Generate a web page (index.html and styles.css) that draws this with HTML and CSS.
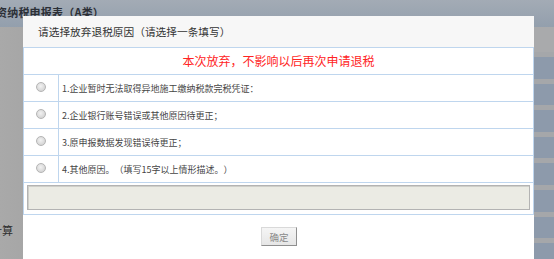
FILE: index.html
```html
<!DOCTYPE html>
<html lang="zh-CN">
<head>
<meta charset="utf-8">
<title>放弃退税原因</title>
<link rel="stylesheet" href="styles.css">
</head>
<body>
<div class="page">
  <div class="topbar"><h1 class="page-title">资纳税申报表（A类）</h1></div>
  <div class="page-body">
    <div class="side"><span class="side-label">计算</span></div>
    <div class="grid">
      <div class="grid-head"></div>
      <div class="grid-row"></div>
      <div class="grid-row"></div>
      <div class="grid-row"></div>
      <div class="grid-row"></div>
      <div class="grid-row"></div>
      <div class="grid-row"></div>
      <div class="grid-row"></div>
      <div class="grid-row"></div>
    </div>
  </div>
</div>

<div class="modal">
  <div class="modal-header">请选择放弃退税原因（请选择一条填写）</div>
  <div class="form">
    <div class="notice">本次放弃，不影响以后再次申请退税</div>
    <label class="option"><span class="radio-cell"><span class="radio"></span></span><span class="option-text">1.企业暂时无法取得异地施工缴纳税款完税凭证：</span></label>
    <label class="option"><span class="radio-cell"><span class="radio"></span></span><span class="option-text">2.企业银行账号错误或其他原因待更正；</span></label>
    <label class="option"><span class="radio-cell"><span class="radio"></span></span><span class="option-text">3.原申报数据发现错误待更正；</span></label>
    <label class="option"><span class="radio-cell"><span class="radio"></span></span><span class="option-text">4.其他原因。（填写15字以上情形描述。）</span></label>
    <div class="text-row"><textarea class="reason" disabled></textarea></div>
  </div>
  <div class="actions"><button class="btn" type="button">确定</button></div>
</div>
</body>
</html>
```

FILE: styles.css
```css
html, body {
  margin: 0;
  padding: 0;
}
body {
  width: 554px;
  height: 259px;
  overflow: hidden;
  position: relative;
  font-family: "Noto Sans CJK SC", "Liberation Sans", sans-serif;
  text-spacing-trim: space-all;
  background: #8e9bab;
}
.page {
  display: flex;
  flex-direction: column;
  height: 259px;
  overflow: hidden;
}
.topbar {
  height: 27px;
  flex: none;
  background: linear-gradient(to bottom, #a3abb5, #939fad);
  display: flex;
  align-items: center;
  overflow: hidden;
}
.page-title {
  margin: 0 0 3px -4px;
  font-size: 11px;
  font-weight: bold;
  letter-spacing: 0.2px;
  color: #2b2f36;
  white-space: nowrap;
}
.page-body {
  flex: 1;
  display: flex;
  overflow: hidden;
}
.side {
  width: 200px;
  flex: none;
  background: linear-gradient(to right, #a9a9a9, #a2a2a2 60px, #9e9e9e);
  display: flex;
  flex-direction: column;
}
.side-label {
  margin: 195px 0 0 -9px;
  font-size: 11px;
  color: #2e2e2e;
  white-space: nowrap;
}
.grid {
  flex: 1;
  display: flex;
  flex-direction: column;
}
.grid-head {
  height: 25px;
  flex: none;
  background: #a9aaac;
}
.grid-row {
  height: 21.6px;
  flex: none;
  border-top: 5px solid #a5a7aa;
  background: #8d9aab;
}

.modal {
  position: absolute;
  left: 23px;
  top: 16px;
  bottom: 0;
  width: 511px;
  background: #fff;
}
.modal-header {
  height: 31px;
  line-height: 31px;
  padding-left: 15px;
  background: #f7f7f7;
  font-size: 10.7px;
  color: #333;
  white-space: nowrap;
}
.form {
  border: 1px solid #bfd6ee;
}
.notice {
  height: 26px;
  line-height: 26px;
  text-align: center;
  font-size: 12px;
  color: #ff2424;
  border-bottom: 1px solid #bfd6ee;
}
.option {
  display: flex;
  height: 26px;
  border-bottom: 1px solid #bfd6ee;
}
.radio-cell {
  width: 34px;
  flex: none;
  border-right: 1px solid #bfd6ee;
  display: flex;
  align-items: center;
  justify-content: center;
}
.radio {
  width: 10px;
  height: 10px;
  margin-top: -3px;
  box-sizing: border-box;
  border-radius: 50%;
  border: 1px solid #b4b4b4;
  background: radial-gradient(circle at 45% 40%, #f2f2f2, #d6d6d6 70%);
}
.option-text {
  display: flex;
  align-items: center;
  padding-left: 3px;
  font-size: 9px;
  color: #454545;
  white-space: nowrap;
}
.text-row {
  height: 31px;
  padding: 2px 3px 0;
  box-sizing: border-box;
}
.reason {
  display: block;
  width: 100%;
  height: 25px;
  box-sizing: border-box;
  margin: 0;
  resize: none;
  background: #ebebe4;
  border: 1px solid #b3b3b3;
  box-shadow: inset 1px 1px 0 #cfcfc9;
}
.actions {
  display: flex;
  justify-content: center;
  padding-top: 12px;
}
.btn {
  width: 36px;
  height: 19px;
  margin-left: 1px;
  padding: 0;
  box-sizing: border-box;
  font-family: inherit;
  font-size: 9.5px;
  color: #8a8a8a;
  background: linear-gradient(to bottom, #f5f5f5, #e6e6e6);
  border: 1px solid;
  border-color: #d9d9d9 #8f8f8f #8f8f8f #d9d9d9;
  border-radius: 0;
}
```
